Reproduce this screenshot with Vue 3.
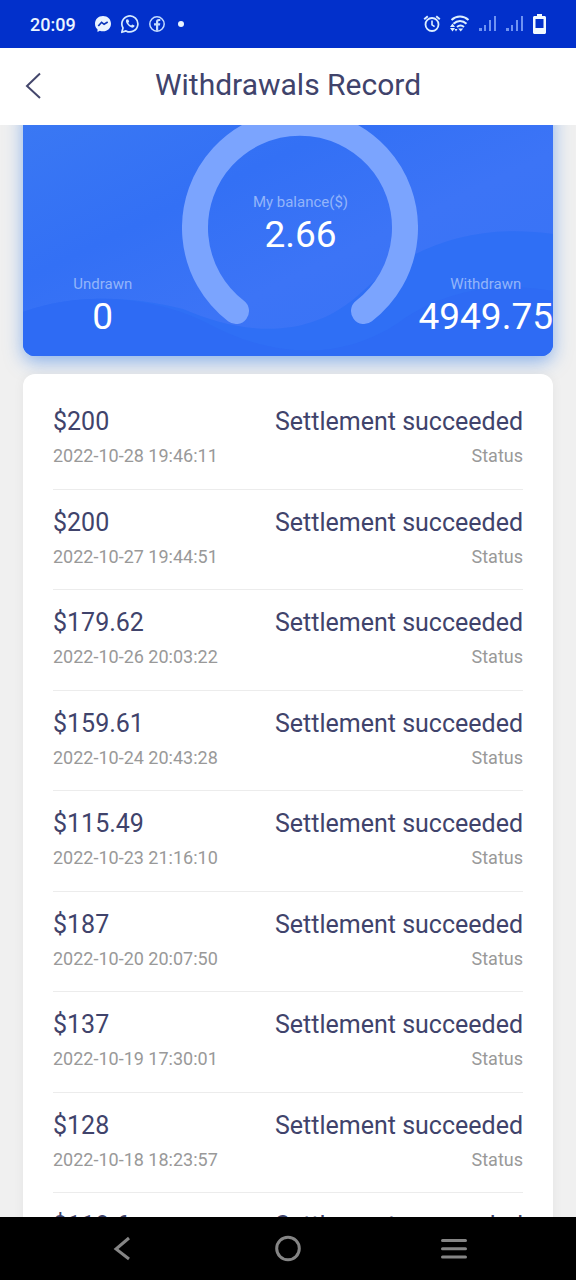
<script setup>
const records = [
  { amount: '$200', time: '2022-10-28 19:46:11' },
  { amount: '$200', time: '2022-10-27 19:44:51' },
  { amount: '$179.62', time: '2022-10-26 20:03:22' },
  { amount: '$159.61', time: '2022-10-24 20:43:28' },
  { amount: '$115.49', time: '2022-10-23 21:16:10' },
  { amount: '$187', time: '2022-10-20 20:07:50' },
  { amount: '$137', time: '2022-10-19 17:30:01' },
  { amount: '$128', time: '2022-10-18 18:23:57' },
  { amount: '$118.6' },
]
</script>

<template>
  <div class="screen">
    <div class="status-bar">
      <span class="clock">20:09</span>
      <div class="notices">
        <svg width="18" height="18" viewBox="0 0 18 18" aria-hidden="true">
          <path d="M9 1C4.3 1 1 4.4 1 8.7c0 2.3.9 4.2 2.5 5.600V17l2.300-1.200c1 .4 2.100.5 3.200.5 4.700 0 8-3.300 8-7.600S13.700 1 9 1z" fill="#e9f4ff" />
          <path d="M4.300 11 7.600 7.300l2.500 2 3.600-2.300" fill="none" stroke="#0a35b8" stroke-width="1.700" />
        </svg>
        <svg width="20" height="20" viewBox="0 0 20 20" aria-hidden="true">
          <path d="M1.800 18.300 3 14a8 8 0 1 1 3 2.900z" fill="none" stroke="#d5eaff" stroke-width="1.700" stroke-linejoin="round" />
          <path d="M6.800 5.300c-1.200.8-1.200 2.500.1 4.500 1.700 2.600 4.300 4.200 6.100 3.800 1-.2 1.600-1.100 1.500-2l-2.200-1.200-1.200 1.200c-1.300-.5-2.300-1.500-2.900-2.800l1-1.100-.9-2.300z" fill="#d5eaff" />
        </svg>
        <svg width="18" height="18" viewBox="0 0 18 18" aria-hidden="true">
          <circle cx="9" cy="9" r="7.200" fill="none" stroke="#c4dcff" stroke-width="1.500" />
          <path d="M8 15.800v-5.300H6V8.300h2V6.800C8 4.900 9 4 10.700 4h1.600v2h-1.100c-.8 0-1 .4-1 1.100v1.200h2.100l-.4 2.200h-1.700v5.300z" fill="#c4dcff" />
        </svg>
        <span class="more-dot"></span>
      </div>
      <div class="system">
        <svg width="18" height="18" viewBox="0 0 18 18" fill="none" stroke="#dceeff" aria-hidden="true">
          <circle cx="9" cy="9.500" r="6.500" stroke-width="1.800" />
          <path d="M9 5.500v4.300l2.600 1.900" stroke-width="1.600" />
          <path d="M1.200 4.200 4.800 1.200M16.800 4.200 13.200 1.200" stroke-width="2" />
        </svg>
        <svg width="20" height="18" viewBox="0 0 20 18" fill="none" stroke="#dceeff" stroke-width="2" aria-hidden="true">
          <path d="M1.500 5C6.500.4 13.500.4 18.500 5M3.500 8.800c3.800-3.800 9.200-3.800 13 0M7 12c2.300-2 4.700-2 7 0" />
          <path d="M10.700 16.500 8.200 13.500h5z" fill="#dceeff" stroke="none" />
          <path d="M0 12h5L2.500 8.500zM2.500 16.500 0 13h5zM6 16.500l-1.500-2.500h3z" fill="#dceeff" stroke="none" />
        </svg>
        <svg v-for="n in 2" :key="n" width="18" height="18" viewBox="0 0 18 18" fill="#6f93f2" aria-hidden="true">
          <path d="M0 13h3v3H0zM5 10h2v6H5zM10 5h2v11h-2zM15 1h2v15h-2z" />
        </svg>
        <svg width="13" height="20" viewBox="0 0 13 20" aria-hidden="true">
          <path fill-rule="evenodd" d="M4 0h5v2h2.500c.8 0 1.500.7 1.500 1.500v15c0 .8-.7 1.500-1.500 1.500h-10C.7 20 0 19.300 0 18.500v-15C0 2.700.7 2 1.500 2H4zM2.500 5v9h8V5z" fill="#f2f9ff" />
        </svg>
      </div>
    </div>

    <header class="title-bar">
      <button class="back" aria-label="Back">
        <svg width="16" height="28" viewBox="0 0 16 28" fill="none" stroke="#44476c" stroke-width="2" aria-hidden="true">
          <path d="M15 2.500 2 15l13 12" />
        </svg>
      </button>
      <h1>Withdrawals Record</h1>
    </header>

    <main class="content">
      <section class="balance-card">
        <svg class="waves" viewBox="0 0 530 255" preserveAspectRatio="none" aria-hidden="true">
          <defs>
            <linearGradient id="glow" x1="0" y1="0" x2="1" y2="1">
              <stop offset="0" stop-color="#3b79f3" />
              <stop offset=".35" stop-color="#3370f5" />
              <stop offset=".6" stop-color="#3c74f6" />
              <stop offset="1" stop-color="#3672f6" />
            </linearGradient>
          </defs>
          <path d="M0 0h530v255H0z" fill="url(#glow)" />
          <path d="M0 211C55 192 110 196 160 208C225 236 290 238 340 190C390 143 455 122 530 133V255H0z" fill="#2f6ff5" />
          <path d="M0 211C60 190 125 195 180 220C245 256 315 262 375 222C430 182 490 183 530 190V255H0z" fill="#2e6bf4" />
        </svg>
        <div class="stat undrawn">
          <span class="label">Undrawn</span>
          <span class="value">0</span>
        </div>
        <div class="gauge">
          <svg width="236" height="216" viewBox="0 0 236 216" fill="none" aria-hidden="true">
            <path d="M54 201A105 105 0 1 1 182 201" stroke="#7ba4fe" stroke-width="26" stroke-linecap="round" />
          </svg>
          <div class="stat reading">
            <span class="label">My balance($)</span>
            <span class="value">2.66</span>
          </div>
        </div>
        <div class="stat">
          <span class="label">Withdrawn</span>
          <span class="value">4949.75</span>
        </div>
      </section>

      <ul class="records">
        <li v-for="(record, index) in records" :key="index">
          <div class="line main-line">
            <span>{{ record.amount }}</span>
            <span>Settlement succeeded</span>
          </div>
          <div v-if="record.time" class="line sub-line">
            <time>{{ record.time }}</time>
            <span>Status</span>
          </div>
        </li>
      </ul>
    </main>

    <nav class="system-nav" aria-label="System">
      <button aria-label="Back">
        <svg width="28" height="28" viewBox="0 0 28 28" fill="none" stroke="#858585" stroke-width="3" aria-hidden="true">
          <path d="M21 3 8 14l13 10" />
        </svg>
      </button>
      <button aria-label="Home">
        <svg width="28" height="28" viewBox="0 0 28 28" fill="none" stroke="#858585" stroke-width="3" aria-hidden="true">
          <circle cx="14" cy="13.500" r="11.300" />
        </svg>
      </button>
      <button aria-label="Recent apps">
        <svg width="28" height="28" viewBox="0 0 28 28" fill="none" stroke="#858585" stroke-width="3" stroke-linecap="round" aria-hidden="true">
          <path d="M2.500 5.500h23M2.500 13.800h23M2.500 22h23" />
        </svg>
      </button>
    </nav>
  </div>
</template>

<style>
body {
  margin: 0;
}
</style>

<style scoped>
.screen {
  display: flex;
  flex-direction: column;
  height: 100vh;
  background: #f0f0f0;
  font-family: Roboto, "Liberation Sans", sans-serif;
  color: #40436b;
}

button {
  display: flex;
  padding: 0;
  border: 0;
  background: none;
}

.status-bar {
  display: flex;
  align-items: center;
  flex: none;
  height: 48px;
  padding: 0 30px;
  background: #0230cb;
  color: #eaf4ff;
}

.clock {
  font-size: 18px;
  font-weight: 500;
}

.notices {
  display: flex;
  align-items: center;
  gap: 8px;
  margin-left: 18px;
}

.more-dot {
  width: 6px;
  height: 6px;
  margin-left: 4px;
  border-radius: 50%;
  background: #eaf4ff;
}

.system {
  display: flex;
  align-items: center;
  gap: 9px;
  margin-left: auto;
}

.title-bar {
  display: grid;
  grid-template-columns: 48px 1fr 48px;
  align-items: center;
  flex: none;
  height: 77px;
  padding-bottom: 4px;
  box-sizing: border-box;
  background: #fff;
}

.back {
  margin-left: 25px;
}

h1 {
  margin: 0;
  font-size: 30px;
  font-weight: 400;
  line-height: 36px;
  text-align: center;
}

.content {
  flex: 1;
  min-height: 0;
  padding: 0 23px;
  overflow: hidden;
}

.balance-card {
  position: relative;
  display: flex;
  align-items: flex-end;
  height: 255px;
  margin-top: -24px;
  border-radius: 12px;
  box-shadow: 0 6px 18px rgba(60, 130, 230, 0.55);
}

.waves {
  position: absolute;
  inset: 0;
  width: 100%;
  height: 100%;
  border-radius: 12px;
}

.stat {
  position: relative;
  display: flex;
  flex-direction: column;
  align-items: center;
  padding-bottom: 17px;
}

.undrawn {
  flex: 1;
}

.label {
  font-size: 15px;
  line-height: 22px;
  color: #93b5fa;
}

.value {
  font-size: 37px;
  line-height: 44px;
  color: #fff;
}

.gauge {
  position: relative;
  display: grid;
  justify-items: center;
  padding-bottom: 30px;
}

.gauge > * {
  grid-area: 1 / 1;
}

.reading {
  align-self: center;
  padding: 12px 0 0;
}

.records {
  display: grid;
  grid-auto-rows: 1fr;
  position: relative;
  min-height: 905px;
  margin: 18px 0 0;
  padding: 15px 30px;
  border-radius: 12px;
  background: #fff;
  box-shadow: 0 0 12px rgba(0, 0, 0, 0.05);
  list-style: none;
}

.records li {
  display: flex;
  flex-direction: column;
  gap: 5px;
  padding-top: 17px;
  border-bottom: 1px solid #ececec;
}

.line {
  display: flex;
  justify-content: space-between;
}

.main-line {
  font-size: 25px;
  line-height: 32px;
}

.sub-line {
  font-size: 18px;
  line-height: 26px;
  color: #999;
}

.system-nav {
  display: flex;
  align-items: center;
  justify-content: center;
  gap: 138px;
  flex: none;
  height: 63px;
  background: #000;
}
</style>
